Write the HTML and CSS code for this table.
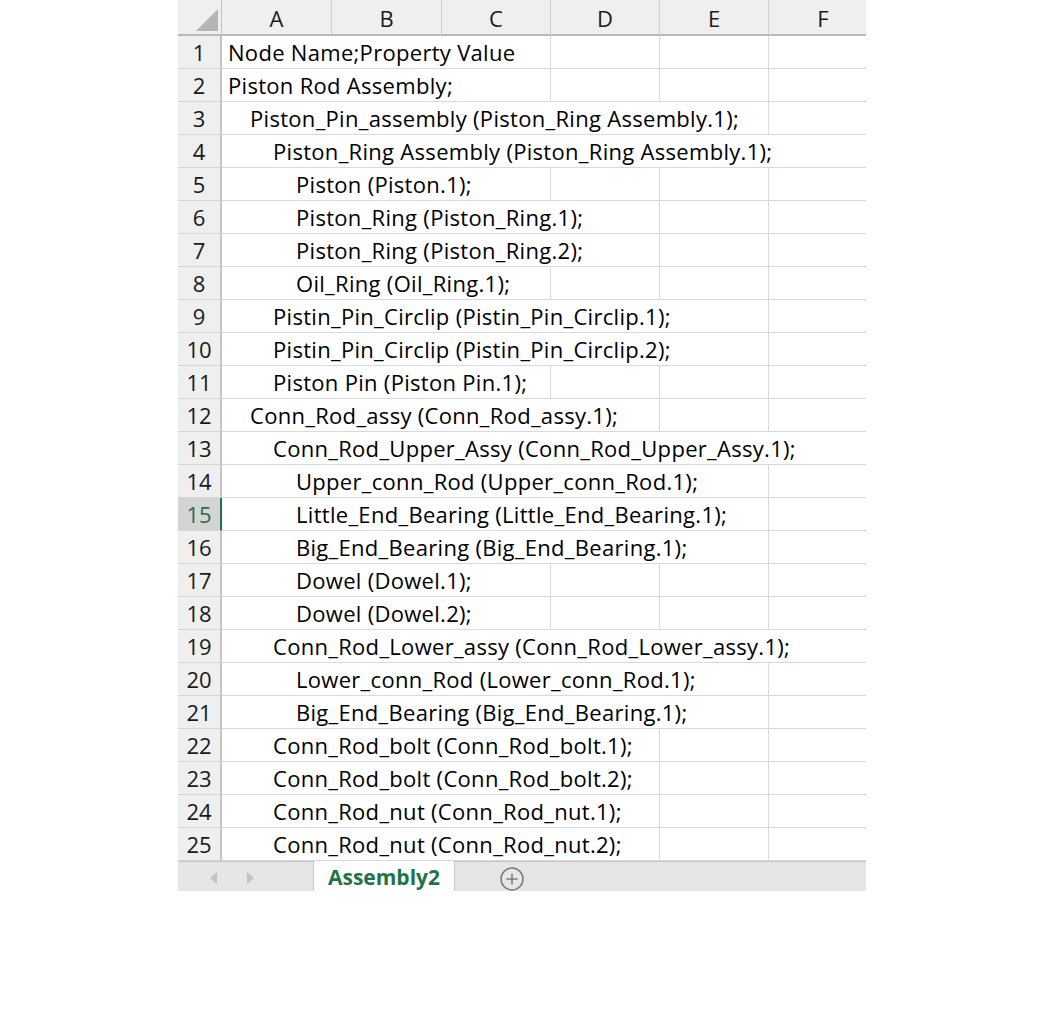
FILE: index.html
```html
<!DOCTYPE html>
<html lang="en">
<head>
    <meta charset="UTF-8">
    <meta name="viewport" content="width=device-width, initial-scale=1.0">
    <title>Assembly2</title>
    <link rel="stylesheet" href="styles.css">
</head>
<body>
    <div class="sheet">
        <div class="grid">
            <div class="corner">
                <svg width="24" height="24" viewBox="0 0 24 24"><polygon points="23,1 23,23 1,23" fill="#b5b5b5"/></svg>
            </div>
            <div class="col-head">A</div>
            <div class="col-head">B</div>
            <div class="col-head">C</div>
            <div class="col-head">D</div>
            <div class="col-head">E</div>
            <div class="col-head">F</div>

            <div class="row-head">1</div>
            <div class="cell span-3">Node Name;Property Value</div>
            <div class="cell"></div><div class="cell"></div><div class="cell"></div>

            <div class="row-head">2</div>
            <div class="cell span-3">Piston Rod Assembly;</div>
            <div class="cell"></div><div class="cell"></div><div class="cell"></div>

            <div class="row-head">3</div>
            <div class="cell span-5 indent-1">Piston_Pin_assembly (Piston_Ring Assembly.1);</div>
            <div class="cell"></div>

            <div class="row-head">4</div>
            <div class="cell span-6 indent-2">Piston_Ring Assembly (Piston_Ring Assembly.1);</div>

            <div class="row-head">5</div>
            <div class="cell span-3 indent-3">Piston (Piston.1);</div>
            <div class="cell"></div><div class="cell"></div><div class="cell"></div>

            <div class="row-head">6</div>
            <div class="cell span-4 indent-3">Piston_Ring (Piston_Ring.1);</div>
            <div class="cell"></div><div class="cell"></div>

            <div class="row-head">7</div>
            <div class="cell span-4 indent-3">Piston_Ring (Piston_Ring.2);</div>
            <div class="cell"></div><div class="cell"></div>

            <div class="row-head">8</div>
            <div class="cell span-3 indent-3">Oil_Ring (Oil_Ring.1);</div>
            <div class="cell"></div><div class="cell"></div><div class="cell"></div>

            <div class="row-head">9</div>
            <div class="cell span-5 indent-2">Pistin_Pin_Circlip (Pistin_Pin_Circlip.1);</div>
            <div class="cell"></div>

            <div class="row-head">10</div>
            <div class="cell span-5 indent-2">Pistin_Pin_Circlip (Pistin_Pin_Circlip.2);</div>
            <div class="cell"></div>

            <div class="row-head">11</div>
            <div class="cell span-3 indent-2">Piston Pin (Piston Pin.1);</div>
            <div class="cell"></div><div class="cell"></div><div class="cell"></div>

            <div class="row-head">12</div>
            <div class="cell span-4 indent-1">Conn_Rod_assy (Conn_Rod_assy.1);</div>
            <div class="cell"></div><div class="cell"></div>

            <div class="row-head">13</div>
            <div class="cell span-6 indent-2">Conn_Rod_Upper_Assy (Conn_Rod_Upper_Assy.1);</div>

            <div class="row-head">14</div>
            <div class="cell span-5 indent-3">Upper_conn_Rod (Upper_conn_Rod.1);</div>
            <div class="cell"></div>

            <div class="row-head selected">15</div>
            <div class="cell span-5 indent-3">Little_End_Bearing (Little_End_Bearing.1);</div>
            <div class="cell"></div>

            <div class="row-head">16</div>
            <div class="cell span-5 indent-3">Big_End_Bearing (Big_End_Bearing.1);</div>
            <div class="cell"></div>

            <div class="row-head">17</div>
            <div class="cell span-3 indent-3">Dowel (Dowel.1);</div>
            <div class="cell"></div><div class="cell"></div><div class="cell"></div>

            <div class="row-head">18</div>
            <div class="cell span-3 indent-3">Dowel (Dowel.2);</div>
            <div class="cell"></div><div class="cell"></div><div class="cell"></div>

            <div class="row-head">19</div>
            <div class="cell span-6 indent-2">Conn_Rod_Lower_assy (Conn_Rod_Lower_assy.1);</div>

            <div class="row-head">20</div>
            <div class="cell span-5 indent-3">Lower_conn_Rod (Lower_conn_Rod.1);</div>
            <div class="cell"></div>

            <div class="row-head">21</div>
            <div class="cell span-5 indent-3">Big_End_Bearing (Big_End_Bearing.1);</div>
            <div class="cell"></div>

            <div class="row-head">22</div>
            <div class="cell span-4 indent-2">Conn_Rod_bolt (Conn_Rod_bolt.1);</div>
            <div class="cell"></div><div class="cell"></div>

            <div class="row-head">23</div>
            <div class="cell span-4 indent-2">Conn_Rod_bolt (Conn_Rod_bolt.2);</div>
            <div class="cell"></div><div class="cell"></div>

            <div class="row-head">24</div>
            <div class="cell span-4 indent-2">Conn_Rod_nut (Conn_Rod_nut.1);</div>
            <div class="cell"></div><div class="cell"></div>

            <div class="row-head">25</div>
            <div class="cell span-4 indent-2">Conn_Rod_nut (Conn_Rod_nut.2);</div>
            <div class="cell"></div><div class="cell"></div>
        </div>

        <div class="tabs">
            <div class="nav">
                <span class="arrow left"></span>
                <span class="arrow right"></span>
            </div>
            <div class="tab active">Assembly2</div>
            <div class="add">
                <svg width="26" height="26" viewBox="0 0 26 26">
                    <circle cx="13" cy="13" r="11" fill="none" stroke="#7a7a7a" stroke-width="1.5"/>
                    <path d="M13 7.5v11M7.5 13h11" stroke="#7a7a7a" stroke-width="1.5"/>
                </svg>
            </div>
        </div>
    </div>
</body>
</html>
```

FILE: styles.css
```css
* {
    box-sizing: border-box;
    margin: 0;
    padding: 0;
}

body {
    background-color: white;
    font-family: 'Open Sans', 'Noto Sans', Arial, sans-serif;
    color: #000;
}

.sheet {
    width: 688px;
    margin-left: 178px;
    overflow: hidden;
}

.grid {
    display: grid;
    grid-template-columns: 44px 110px 110px 109px 109px 109px 109px;
    grid-template-rows: 36px;
    grid-auto-rows: 33px;
    width: 700px;
    font-size: 22px;
}

.corner {
    background-color: #efefef;
    border-right: 1px solid #c4c4c4;
    border-bottom: 2px solid #b9b9b9;
    display: flex;
    align-items: flex-end;
    justify-content: flex-end;
    padding: 0 2px 2px 0;
}

.col-head {
    background-color: #efefef;
    border-right: 1px solid #d0d0d0;
    border-bottom: 2px solid #b9b9b9;
    display: flex;
    align-items: center;
    justify-content: center;
    color: #1a1a1a;
    padding-top: 2px;
}

.row-head {
    background-color: #efefef;
    border-right: 2px solid #c4c4c4;
    border-bottom: 1px solid #d6d6d6;
    display: flex;
    align-items: center;
    justify-content: center;
    color: #1a1a1a;
}

.row-head.selected {
    background-color: #d4d4d4;
    color: #217346;
    border-right-color: #217346;
}

.cell {
    border-right: 1px solid #d9d9d9;
    border-bottom: 1px solid #d9d9d9;
    padding-left: 6px;
    white-space: nowrap;
    letter-spacing: 0.3px;
    display: flex;
    align-items: center;
    overflow: visible;
}

.span-3 { grid-column: span 3; }
.span-4 { grid-column: span 4; }
.span-5 { grid-column: span 5; }
.span-6 { grid-column: span 6; }

.indent-1 { padding-left: 28px; }
.indent-2 { padding-left: 51px; }
.indent-3 { padding-left: 74px; }

.tabs {
    height: 30px;
    background-color: #e6e6e6;
    border-top: 1px solid #c6c6c6;
    display: flex;
}

.nav {
    width: 135px;
    display: flex;
    align-items: center;
    padding: 2px 0 0 32px;
    gap: 30px;
}

.arrow {
    width: 0;
    height: 0;
    border-top: 6px solid transparent;
    border-bottom: 6px solid transparent;
}

.arrow.left {
    border-right: 7px solid #c2c2c2;
}

.arrow.right {
    border-left: 7px solid #c2c2c2;
}

.tab {
    width: 142px;
    margin-top: -1px;
    background-color: white;
    border-left: 1px solid #c6c6c6;
    border-right: 1px solid #c6c6c6;
    display: flex;
    align-items: center;
    justify-content: center;
    font-weight: bold;
    font-size: 21px;
    color: #217346;
}

.tab.active {
    padding-top: 2px;
}

.add {
    display: flex;
    align-items: center;
    padding-left: 44px;
    padding-top: 5px;
}
```
